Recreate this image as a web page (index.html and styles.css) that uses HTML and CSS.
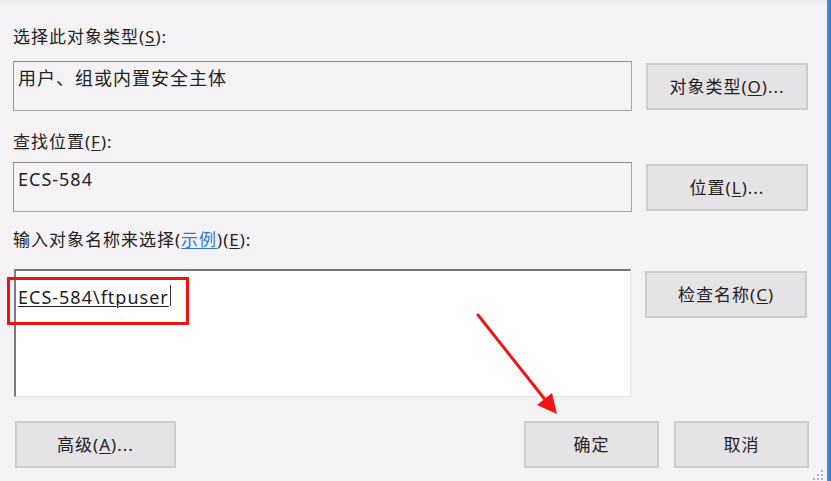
FILE: index.html
```html
<!DOCTYPE html>
<html lang="zh-CN">
<head>
<meta charset="utf-8">
<title>选择用户或组</title>
<link rel="stylesheet" href="styles.css">
</head>
<body>
<div class="window">
  <div class="dialog">
    <div class="label label-first">选择此对象类型(<u>S</u>):</div>
    <div class="row">
      <div class="field field-static">用户、组或内置安全主体</div>
      <button class="btn btn-side">对象类型(<u>O</u>)...</button>
    </div>

    <div class="label label-second">查找位置(<u>F</u>):</div>
    <div class="row">
      <div class="field field-static field-latin">ECS-584</div>
      <button class="btn btn-side">位置(<u>L</u>)...</button>
    </div>

    <div class="label label-third">输入对象名称来选择(<span class="link">示例</span>)(<u>E</u>):</div>
    <div class="row">
      <div class="field field-edit"><span class="resolved">ECS-584\ftpuser</span><span class="caret"></span></div>
      <button class="btn btn-side">检查名称(<u>C</u>)</button>
    </div>

    <div class="actions">
      <button class="btn btn-adv">高级(<u>A</u>)...</button>
      <div class="spacer"></div>
      <button class="btn btn-ok">确定</button>
      <button class="btn btn-ok">取消</button>
    </div>
  </div>
  <div class="edge"></div>
  <div class="grip">
    <span></span><span></span><span></span><span></span><span></span><span></span>
  </div>
  <div class="highlight"></div>
  <svg class="arrow" width="831" height="481" viewBox="0 0 831 481">
    <line x1="478" y1="315" x2="547" y2="402" stroke="#f01515" stroke-width="3" stroke-linecap="round"/>
    <polygon points="557,414 537,405 552,393" fill="#f01515"/>
  </svg>
</div>
</body>
</html>
```
FILE: styles.css
```css
* { box-sizing: border-box; }
html, body {
  margin: 0;
  padding: 0;
}
body {
  width: 831px;
  height: 481px;
  overflow: hidden;
  background: #f5f2f5;
  font-family: "Noto Sans", "Noto Sans CJK SC", sans-serif;
  font-size: 17px;
  letter-spacing: 1px;
  color: #222222;
}
.window {
  position: relative;
  width: 831px;
  height: 481px;
  display: flex;
  background: linear-gradient(#ebe8eb 0, #f5f2f5 5px);
}
.dialog {
  flex: 1;
  padding: 27px 0 0 13px;
  display: flex;
  flex-direction: column;
}
.label {
  height: 20px;
  line-height: 20px;
  white-space: nowrap;
}
.label-first { margin-bottom: 14px; }
.label-second { margin-top: 21px; margin-bottom: 10px; }
.label-third { margin-top: 18px; margin-bottom: 19px; }
.label u, .btn u { text-decoration-thickness: 1px; text-underline-offset: 2px; }
.link {
  color: #2e7bd6;
  text-decoration: underline;
  text-decoration-thickness: 1px;
  text-underline-offset: 2px;
}
.row {
  display: flex;
  align-items: flex-start;
  gap: 14px;
}
.field {
  width: 619px;
  font-size: 18px;
  line-height: 20px;
  white-space: nowrap;
}
.field-static {
  height: 50px;
  border: 1px solid #a9a6a9;
  border-top-color: #8f8c8f;
  border-left-color: #9a979a;
  padding: 6px 0 0 4px;
  background: #f5f2f5;
}
.field-latin { padding-top: 6px; }
.field-edit {
  margin-left: 1px;
  width: 617px;
  height: 128px;
  background: #ffffff;
  border-top: 2px solid #777477;
  border-left: 2px solid #7d7a7d;
  border-right: 1px solid #e6e3e6;
  border-bottom: 1px solid #e6e3e6;
  padding: 16px 0 0 2px;
  display: flex;
  align-items: flex-start;
}
.resolved {
  text-decoration: underline;
  text-decoration-thickness: 1px;
  text-underline-offset: 2px;
}
.caret {
  display: inline-block;
  width: 1px;
  height: 21px;
  margin-left: 1px;
  margin-top: -2px;
  background: #333;
}
.btn {
  font: inherit;
  letter-spacing: 1px;
  color: #222222;
  background: #e6e3e6;
  border: 2px solid #cfcccf;
  padding: 0;
  margin: 0;
  line-height: 20px;
  white-space: nowrap;
}
.btn-side {
  width: 162px;
  height: 47px;
  margin-top: 2px;
}
.actions {
  display: flex;
  margin-top: 24px;
  gap: 15px;
  padding-right: 18px;
}
.spacer { flex: 1; }
.btn-adv {
  width: 161px;
  height: 47px;
  margin-left: 2px;
}
.btn-ok {
  width: 135px;
  height: 47px;
}
.edge {
  width: 4px;
  height: 100%;
  background: #3b8bdc;
  border-right: 1px solid #2a6fb8;
}
.grip {
  position: absolute;
  right: 8px;
  bottom: 1px;
  width: 12px;
  height: 12px;
}
.grip span {
  position: absolute;
  width: 2px;
  height: 2px;
  background: #b8b5b8;
}
.grip span:nth-child(1) { right: 0; bottom: 0; }
.grip span:nth-child(2) { right: 4px; bottom: 0; }
.grip span:nth-child(3) { right: 8px; bottom: 0; }
.grip span:nth-child(4) { right: 0; bottom: 4px; }
.grip span:nth-child(5) { right: 4px; bottom: 4px; }
.grip span:nth-child(6) { right: 0; bottom: 8px; }
.highlight {
  position: absolute;
  left: 7px;
  top: 277px;
  width: 182px;
  height: 48px;
  border: 3px solid #f01010;
}
.arrow {
  position: absolute;
  left: 0;
  top: 0;
  pointer-events: none;
}
```
